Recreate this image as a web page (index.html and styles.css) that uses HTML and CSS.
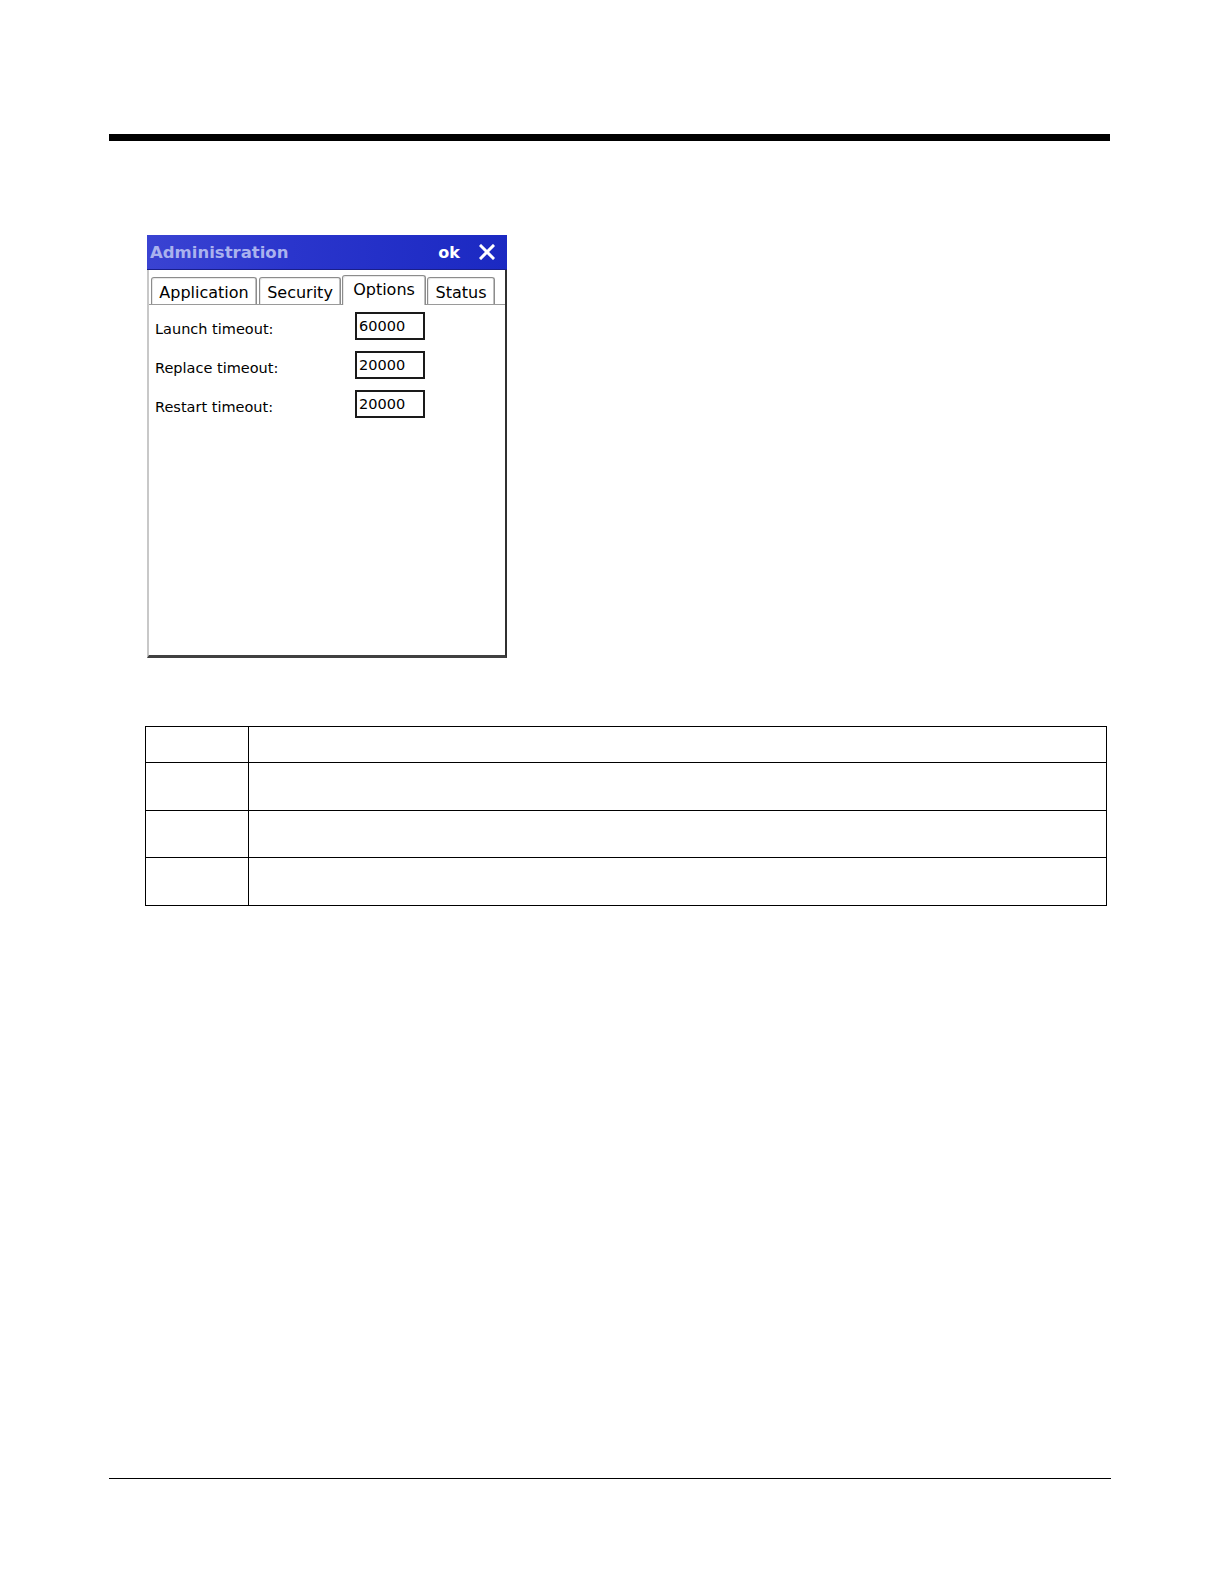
FILE: index.html
```html
<!DOCTYPE html>
<html>
<head>
<meta charset="utf-8">
<link rel="stylesheet" href="styles.css">
</head>
<body>
<div class="page">
  <div class="top-rule"></div>

  <div class="window">
    <div class="titlebar">
      <span class="title">Administration</span>
      <span class="actions">
        <span class="ok">ok</span>
        <svg class="close" width="16" height="16" viewBox="0 0 16 16"><path d="M2 2 L14 14 M14 2 L2 14" stroke="#fff" stroke-width="3" stroke-linecap="square"/></svg>
      </span>
    </div>
    <div class="tabs">
      <div class="tab tab-app">Application</div>
      <div class="tab tab-sec">Security</div>
      <div class="tab tab-opt active">Options</div>
      <div class="tab tab-stat">Status</div>
    </div>
    <div class="content">
      <div class="row">
        <span class="label">Launch timeout:</span>
        <span class="field">60000</span>
      </div>
      <div class="row">
        <span class="label">Replace timeout:</span>
        <span class="field">20000</span>
      </div>
      <div class="row">
        <span class="label">Restart timeout:</span>
        <span class="field">20000</span>
      </div>
    </div>
  </div>

  <table class="grid">
    <tr class="r1"><td class="c1"></td><td></td></tr>
    <tr class="r2"><td class="c1"></td><td></td></tr>
    <tr class="r2"><td class="c1"></td><td></td></tr>
    <tr class="r2"><td class="c1"></td><td></td></tr>
  </table>

  <div class="bottom-rule"></div>
</div>
</body>
</html>
```

FILE: styles.css
```css
html, body {
  margin: 0;
  padding: 0;
  background: #fff;
}
.page {
  width: 1224px;
  padding-top: 134px;
  box-sizing: border-box;
  font-family: "DejaVu Sans", Verdana, sans-serif;
}
.top-rule {
  margin-left: 109px;
  width: 1001px;
  height: 7px;
  background: #000;
}
.window {
  margin-top: 94px;
  margin-left: 147px;
  width: 360px;
  height: 423px;
  box-sizing: border-box;
  display: flex;
  flex-direction: column;
  border-left: 2px solid #c8c8c8;
  border-right: 2px solid #303030;
  border-bottom: 3px solid #404040;
  background: #fff;
}
.titlebar {
  height: 35px;
  margin-left: -2px;
  margin-right: -2px;
  background: linear-gradient(to right, #3a43d2 0%, #2a35cc 40%, #1b29c2 100%);
  display: flex;
  align-items: center;
  justify-content: space-between;
  padding: 0 12px 0 3px;
  border-bottom: 1px solid #1a1f8a;
  box-sizing: border-box;
}
.title {
  color: #aab2ee;
  font-weight: bold;
  font-size: 16.5px;
}
.actions {
  display: flex;
  align-items: center;
  gap: 19px;
}
.ok {
  color: #fff;
  font-weight: bold;
  font-size: 16px;
}
.close {
  display: block;
}
.tabs {
  display: flex;
  align-items: flex-end;
  height: 35px;
  padding-left: 2px;
  border-bottom: 1px solid #9a9a9a;
  box-sizing: border-box;
  gap: 2px;
}
.tab {
  height: 27px;
  box-sizing: border-box;
  border: 1px solid #8c8c8c;
  border-bottom: none;
  border-top-left-radius: 3px;
  border-top-right-radius: 3px;
  box-shadow: inset 1px 1px 0 #e8e8e8, inset -1px 0 0 #c0c0c0;
  font-size: 16px;
  color: #000;
  text-align: center;
  line-height: 30px;
  background: #fff;
}
.tab-app { width: 106px; }
.tab-sec { width: 82px; }
.tab-opt { width: 84px; margin-left: -1px; margin-right: -1px; }
.tab-stat { width: 68px; }
.tab.active {
  height: 30px;
  line-height: 28px;
  margin-bottom: -1px;
}
.content {
  flex: 1;
  padding: 7px 0 0 6px;
  display: flex;
  flex-direction: column;
  gap: 11px;
}
.row {
  display: flex;
  align-items: center;
  height: 28px;
}
.label {
  width: 200px;
  font-size: 14.5px;
  color: #000;
  padding-top: 6px;
}
.field {
  width: 70px;
  height: 28px;
  box-sizing: border-box;
  border: 2px solid #1a1a1a;
  font-size: 14.5px;
  line-height: 24px;
  padding-left: 2px;
  color: #000;
}
.grid {
  margin-top: 68px;
  margin-left: 145px;
  width: 962px;
  border-collapse: collapse;
}
.grid td {
  border: 1.5px solid #000;
  padding: 0;
}
.grid .c1 {
  width: 102px;
}
.r1 { height: 36px; }
.r2 { height: 47.5px; }
.bottom-rule {
  margin-top: 572px;
  margin-left: 109px;
  width: 1002px;
  height: 1.5px;
  background: #000;
}
```
